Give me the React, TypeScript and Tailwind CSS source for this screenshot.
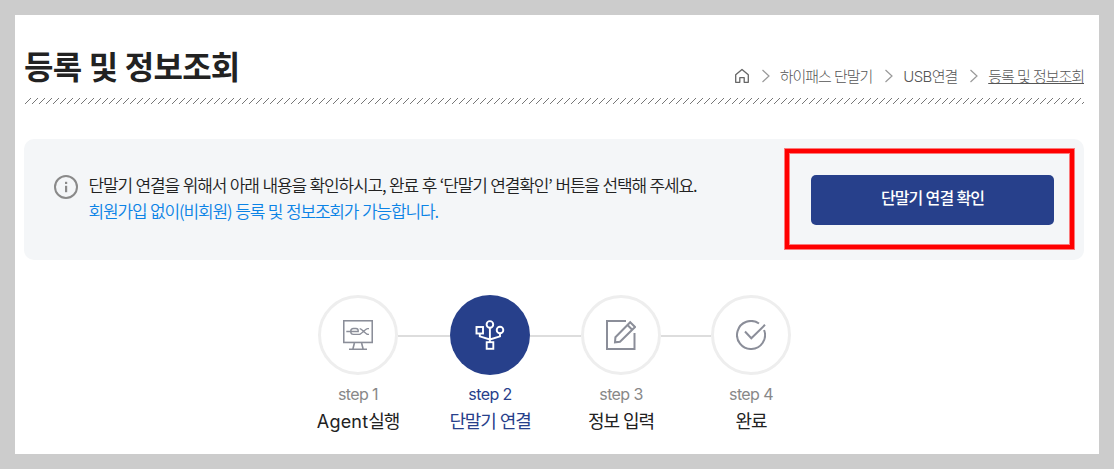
import type { ReactNode } from 'react';

interface Step {
  no: string;
  latin?: string;
  label: string;
  icon: ReactNode;
  active?: boolean;
  noClass: string;
  labelClass: string;
  lineClass?: string;
}

const ChevronIcon = () => (
  <svg className="h-[14px] w-[10px] shrink-0" viewBox="0 0 10 14" fill="none" stroke="#999" strokeWidth="1.2">
    <path d="M1.5 1 L8 7 L1.5 13" />
  </svg>
);

const HomeIcon = () => (
  <svg className="h-4 w-4 shrink-0" viewBox="0 0 16 16" fill="none" stroke="#666" strokeWidth="1.3">
    <path d="M1.7 6.7 L8 1.5 L14.3 6.7 V14.3 H10.2 V9.7 H5.8 V14.3 H1.7 Z" strokeLinejoin="round" />
  </svg>
);

const InfoIcon = () => (
  <svg className="h-6 w-6 shrink-0" viewBox="0 0 24 24" fill="none">
    <circle cx="12" cy="12" r="11" stroke="#8a8a8a" strokeWidth="2" />
    <rect x="11" y="6.8" width="2.2" height="2.2" fill="#8a8a8a" />
    <rect x="11" y="10.8" width="2.2" height="6.4" fill="#8a8a8a" />
  </svg>
);

const MonitorIcon = () => (
  <svg className="h-[30px] w-[30px]" viewBox="0 0 30 30" fill="none" stroke="#8b8e99" strokeWidth="1.6">
    <rect x="0.75" y="0.75" width="28.5" height="21.7" />
    <path d="M11.4 23 L9.9 29 M18.6 23 L20.1 29 M6 29.2 H24" />
    <path
      d="M3.3 11.5 H15.2 V10.8 C15.2 9 14.4 8.5 13 8.5 H10.5 C8.5 8.5 7.7 9.4 7.7 11.5 C7.7 13.6 8.5 14.4 10.5 14.4 H16.3 C18.3 14.4 22.5 8.6 24.5 8.6 H26 M16.7 8.6 C19 8.6 22.5 14.4 24.8 14.4 H26"
      strokeWidth="1.4"
    />
  </svg>
);

const UsbIcon = () => (
  <svg className="h-[30px] w-[30px]" viewBox="0 0 30 30" fill="none" stroke="#fff" strokeWidth="1.9">
    <rect x="1.5" y="7" width="6.5" height="6.5" />
    <circle cx="14.9" cy="4.4" r="3.3" />
    <circle cx="25" cy="10" r="3.3" />
    <rect x="11.7" y="22.2" width="6.6" height="6.6" />
    <path d="M14.9 8 V22 M4.8 13.5 V16.3 L14.9 19.5 M25 13.5 V16.3 L14.9 19.5" />
  </svg>
);

const EditIcon = () => (
  <svg className="h-[30px] w-[30px]" viewBox="0 0 30 30" fill="none" stroke="#8b8e99" strokeWidth="2">
    <path d="M20 1 H1 V29 H28.5 V13" />
    <path d="M9 22.3 L9.4 17.3 L24.2 2.2 L29 7 L14 21.7 Z M21.5 5 L26.2 9.7" />
  </svg>
);

const DoneIcon = () => (
  <svg className="h-[30px] w-[30px]" viewBox="0 0 30 30" fill="none" stroke="#8b8e99" strokeWidth="2">
    <path d="M23 3.5 A14 14 0 1 0 28.1 10" />
    <path d="M9 11.5 L15.3 18.2 L29 4.8" />
  </svg>
);

const steps: Step[] = [
  { no: 'step 1', latin: 'Agent', label: '실행', icon: <MonitorIcon />, noClass: 'text-[#888]', labelClass: 'text-[#222]' },
  { no: 'step 2', label: '단말기 연결', icon: <UsbIcon />, active: true, noClass: 'text-[#27408b]', labelClass: 'text-[#27408b]', lineClass: 'w-[52px]' },
  { no: 'step 3', label: '정보 입력', icon: <EditIcon />, noClass: 'text-[#888]', labelClass: 'text-[#222]', lineClass: 'w-[51px]' },
  { no: 'step 4', label: '완료', icon: <DoneIcon />, noClass: 'text-[#888]', labelClass: 'text-[#222]', lineClass: 'w-[50px]' },
];

export default function App() {
  return (
    <div className="h-[469px] w-[1114px] bg-[#ccc] p-[15px] font-['Noto_Sans_CJK_KR',sans-serif]">
      <main className="h-[439px] bg-white pr-[15px] pl-[9px]">
        {/* Page title & breadcrumb */}
        <header className="flex h-[83px] justify-between">
          <h1 className="mt-[27px] text-[32px] leading-[46px] font-bold tracking-[-0.8px] [word-spacing:1px] whitespace-nowrap text-[#222]">
            등록 및 정보조회
          </h1>
          <nav className="mt-[51px] flex h-5 items-center text-[15px] leading-5 font-light tracking-[-1.05px] [word-spacing:1px] whitespace-nowrap text-[#555]">
            <HomeIcon />
            <span className="mr-[9px] ml-[11px] flex"><ChevronIcon /></span>
            <span>하이패스 단말기</span>
            <span className="mr-[9px] ml-[12px] flex"><ChevronIcon /></span>
            <span><span className="font-['Inter'] text-[15px] tracking-[-0.6px]">USB</span>연결</span>
            <span className="mr-[9px] ml-[12px] flex"><ChevronIcon /></span>
            <span className="underline underline-offset-1">등록 및 정보조회</span>
          </nav>
        </header>
        <svg className="block h-[6px] w-[1060px]" shapeRendering="crispEdges">
          <defs>
            <pattern id="hatch" width="7" height="6" patternUnits="userSpaceOnUse">
              <path
                d="M1 5h1v1H1z M2 4h1v1H2z M3 3h1v1H3z M4 2h1v1H4z M5 1h1v1H5z M6 0h1v1H6z"
                fill="#777"
              />
            </pattern>
          </defs>
          <rect width="1060" height="6" fill="url(#hatch)" />
        </svg>

        {/* Notice box */}
        <section className="mt-[35px] flex h-[121px] rounded-[10px] bg-[#f4f6f8] pr-[30px] pl-[30px]">
          <div className="mt-9">
            <InfoIcon />
          </div>
          <div className="mt-[33px] ml-[10.5px] text-[17px] leading-[26px] font-[350] tracking-[-1.15px] [word-spacing:1px] whitespace-nowrap">
            <p className="text-[#222]">
              단말기 연결을 위해서 아래 내용을 확인하시고, 완료 후 ‘단말기 연결확인’ 버튼을 선택해 주세요.
            </p>
            <p className="text-[#0b83e6]">회원가입 없이(비회원) 등록 및 정보조회가 가능합니다.</p>
          </div>
          <div className="relative mt-9 ml-auto h-[50px] w-[243px]">
            <button
              type="button"
              className="block h-[50px] w-[243px] rounded-[5px] bg-[#27408b] pb-[6px] text-[16px] font-medium tracking-[-0.95px] [word-spacing:0.7px] text-white"
            >
              단말기 연결 확인
            </button>
            <div className="pointer-events-none absolute -top-[26px] -left-[26px] h-[100px] w-[289px] border-4 border-[#f00] shadow-[0_0_0_1px_#ff000080,inset_0_0_0_1px_#ff000080]" />
          </div>
        </section>

        {/* Steps */}
        <ol className="mt-[35px] ml-[294px] flex items-start">
          {steps.map((step) => (
            <li key={step.no} className="contents">
              {step.lineClass && <span className={`mt-10 h-[2px] shrink-0 bg-[#ddd] ${step.lineClass}`} />}
              <div className="flex w-20 flex-col items-center whitespace-nowrap">
                <div
                  className={
                    step.active
                      ? 'flex h-20 w-20 items-center justify-center rounded-full bg-[#27408b]'
                      : 'flex h-20 w-20 items-center justify-center rounded-full border-[3px] border-[#eee] bg-white'
                  }
                >
                  {step.icon}
                </div>
                <span className={`mt-[7px] font-['Inter'] text-[16px] leading-6 font-normal tracking-[-0.6px] ${step.noClass}`}>
                  {step.no}
                </span>
                <span className={`mt-[1px] text-[18px] leading-[26px] font-normal tracking-[-1.1px] [word-spacing:1px] ${step.labelClass}`}>
                  {step.latin && <span className="font-['Inter'] tracking-[0.2px]">{step.latin}</span>}
                  {step.label}
                </span>
              </div>
            </li>
          ))}
        </ol>
      </main>
    </div>
  );
}
